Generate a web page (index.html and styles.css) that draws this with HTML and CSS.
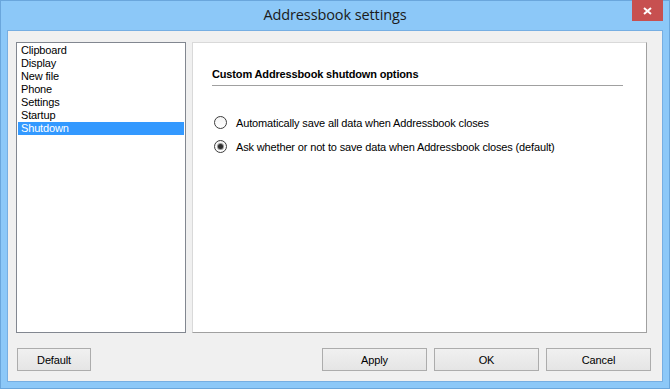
FILE: index.html
```html
<!DOCTYPE html>
<html lang="en">
<head>
    <meta charset="UTF-8">
    <title>Addressbook settings</title>
    <link rel="stylesheet" href="styles.css">
</head>
<body>
    <div class="window">
        <div class="titlebar">
            <span></span>
            <span class="title">Addressbook settings</span>
            <button class="close-btn" aria-label="Close">
                <svg width="9" height="8" viewBox="0 0 9 8">
                    <path d="M1 1 L8 7 M8 1 L1 7" stroke="#fff" stroke-width="2"/>
                </svg>
            </button>
        </div>

        <div class="client">
            <div class="main">
                <ul class="category-list">
                    <li>Clipboard</li>
                    <li>Display</li>
                    <li>New file</li>
                    <li>Phone</li>
                    <li>Settings</li>
                    <li>Startup</li>
                    <li class="selected">Shutdown</li>
                </ul>

                <div class="panel">
                    <div class="panel-heading">Custom Addressbook shutdown options</div>
                    <div class="options">
                        <label class="radio-row">
                            <span class="radio"></span>
                            Automatically save all data when Addressbook closes
                        </label>
                        <label class="radio-row">
                            <span class="radio checked"></span>
                            Ask whether or not to save data when Addressbook closes (default)
                        </label>
                    </div>
                </div>
            </div>

            <div class="footer">
                <button class="btn">Default</button>
                <div class="btn-group">
                    <button class="btn">Apply</button>
                    <button class="btn">OK</button>
                    <button class="btn">Cancel</button>
                </div>
            </div>
        </div>
    </div>
</body>
</html>
```

FILE: styles.css
```css
body {
    margin: 0;
    font-family: "Liberation Sans", Arial, sans-serif;
    font-size: 11px;
    letter-spacing: -0.15px;
    color: #000;
}

.window {
    width: 670px;
    height: 389px;
    box-sizing: border-box;
    background-color: #8cc8f8;
    box-shadow: inset 0 0 0 1px #6aa6dc;
    display: flex;
    flex-direction: column;
}

.titlebar {
    height: 30px;
    display: grid;
    grid-template-columns: 1fr auto 1fr;
    align-items: start;
}

.title {
    font-family: "Open Sans", "Noto Sans", sans-serif;
    font-size: 14.5px;
    color: #1b1b1b;
    line-height: 30px;
    letter-spacing: -0.1px;
}

.close-btn {
    justify-self: end;
    margin-right: 7px;
    width: 31px;
    height: 21px;
    padding: 0;
    border: none;
    background-color: #c75050;
    display: flex;
    align-items: center;
    justify-content: center;
}

.client {
    flex: 1;
    margin: 0 7px 7px 7px;
    border: 1px solid #76aee2;
    background-color: #f0f0f0;
    display: flex;
    flex-direction: column;
    padding: 11px 0 0 8px;
}

.main {
    display: flex;
    gap: 6px;
    height: 291px;
}

.category-list {
    list-style: none;
    margin: 0;
    padding: 1px 1px 0 1px;
    width: 170px;
    box-sizing: border-box;
    border: 1px solid #828790;
    background-color: #fff;
}

.category-list li {
    height: 13px;
    line-height: 13px;
    padding-left: 3px;
}

.category-list li.selected {
    background-color: #3399ff;
    color: #fff;
}

.panel {
    width: 455px;
    box-sizing: border-box;
    border: 1px solid #a0a0a0;
    border-top-color: #d9d9d9;
    border-left-color: #d9d9d9;
    background-color: #fff;
    padding: 25px 0 0 19px;
}

.panel-heading {
    width: 411px;
    font-weight: bold;
    line-height: 13px;
    padding-bottom: 4px;
    border-bottom: 1px solid #a0a0a0;
}

.options {
    margin-top: 30px;
    display: flex;
    flex-direction: column;
    gap: 11px;
}

.radio-row {
    display: flex;
    align-items: center;
    gap: 9px;
    height: 13px;
    padding-left: 2px;
}

.radio {
    width: 13px;
    height: 13px;
    box-sizing: border-box;
    border: 1px solid #3c3c3c;
    border-radius: 50%;
    background: linear-gradient(#f4f4f4, #ffffff);
    display: flex;
    align-items: center;
    justify-content: center;
}

.radio.checked::after {
    content: "";
    width: 5px;
    height: 5px;
    border-radius: 50%;
    background-color: #2e2e2e;
    box-shadow: 0 0 0 1px #9a9a9a;
}

.footer {
    margin-top: 15px;
    padding-right: 11px;
    display: flex;
    justify-content: space-between;
}

.btn-group {
    display: flex;
    gap: 7px;
}

.btn {
    height: 23px;
    width: 105px;
    padding: 0;
    font-family: "Liberation Sans", Arial, sans-serif;
    font-size: 11px;
    letter-spacing: -0.15px;
    color: #000;
    border: 1px solid #acacac;
    background: linear-gradient(#f0f0f0, #e5e5e5);
}

.footer > .btn {
    width: 74px;
    margin-left: 1px;
}
```
